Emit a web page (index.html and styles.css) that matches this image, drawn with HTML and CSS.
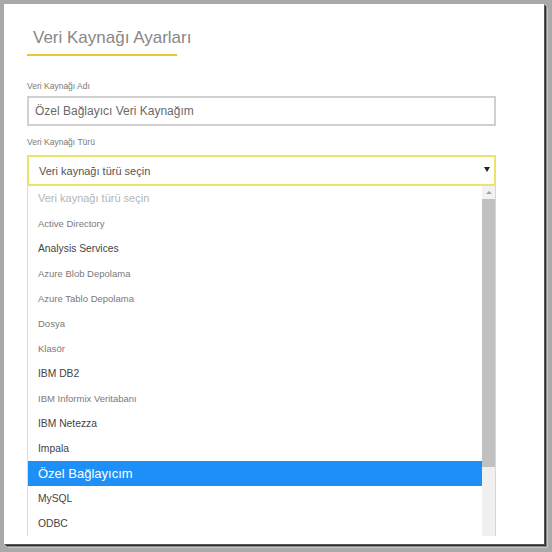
FILE: index.html
```html
<!DOCTYPE html>
<html lang="tr">
<head>
<meta charset="utf-8">
<link rel="stylesheet" href="styles.css">
</head>
<body>
<div class="frame">
  <div class="content">
    <h1 class="title">Veri Kaynağı Ayarları</h1>
    <div class="label first">Veri Kaynağı Adı</div>
    <div class="input">Özel Bağlayıcı Veri Kaynağım</div>
    <div class="label">Veri Kaynağı Türü</div>
    <div class="select"><span>Veri kaynağı türü seçin</span><span class="arrow"></span></div>
    <div class="list">
      <div class="items">
        <div class="item placeholder">Veri kaynağı türü seçin</div>
        <div class="item small">Active Directory</div>
        <div class="item big">Analysis Services</div>
        <div class="item small">Azure Blob Depolama</div>
        <div class="item small">Azure Tablo Depolama</div>
        <div class="item small">Dosya</div>
        <div class="item small">Klasör</div>
        <div class="item big">IBM DB2</div>
        <div class="item small">IBM Informix Veritabanı</div>
        <div class="item big">IBM Netezza</div>
        <div class="item big">Impala</div>
        <div class="item selected">Özel Bağlayıcım</div>
        <div class="item big">MySQL</div>
        <div class="item big">ODBC</div>
      </div>
      <div class="scrollbar">
        <div class="sb-up"><span class="up-arrow"></span></div>
        <div class="sb-thumb"></div>
        <div class="sb-track"></div>
      </div>
    </div>
  </div>
</div>
</body>
</html>
```
FILE: styles.css
```css
html, body {
  margin: 0;
  padding: 0;
}
body {
  background: #a9a9a9;
  width: 552px;
  height: 552px;
  overflow: hidden;
  font-family: "Liberation Sans", Arial, sans-serif;
}
.frame {
  margin: 4px 0 0 4px;
  width: 540px;
  height: 540px;
  background: #ffffff;
  box-shadow: 1px 1px 0 #555, 2px 2px 0 #2e2e2e, 3px 3px 0 #8a8a8a, 4px 4px 0 #c4c4c4;
  overflow: hidden;
}
.content {
  padding: 0 48px 0 23px;
  display: flex;
  flex-direction: column;
}
.title {
  margin: 24px 0 0 0;
  width: 150px;
  font-size: 17px;
  font-weight: normal;
  color: #878787;
  padding: 0 0 6px 6px;
  box-sizing: border-box;
  height: 28px;
  line-height: 20px;
  white-space: nowrap;
  border-bottom: 2px solid #e6c832;
}
.label {
  font-size: 8.5px;
  color: #7a7a7a;
  height: 12px;
  line-height: 12px;
  margin-top: 10px;
}
.label.first {
  margin-top: 24px;
}
.input {
  margin-top: 4px;
  height: 30px;
  box-sizing: border-box;
  border: 2px solid #d0d0d0;
  font-size: 12px;
  color: #6a6a6a;
  line-height: 26px;
  padding-left: 6px;
}
.select {
  margin-top: 7px;
  height: 31px;
  box-sizing: border-box;
  border: 2px solid #ece46a;
  display: flex;
  align-items: center;
  justify-content: space-between;
  padding: 0 4px 0 10px;
  font-size: 11px;
  color: #555;
}
.arrow {
  width: 0;
  height: 0;
  border-left: 3px solid transparent;
  border-right: 3px solid transparent;
  border-top: 5px solid #222;
  margin-top: -2px;
}
.list {
  height: 350px;
  display: flex;
  border-left: 1px solid #dcdcdc;
}
.items {
  flex: 1;
  display: flex;
  flex-direction: column;
  overflow: hidden;
}
.item {
  flex: 0 0 25px;
  height: 25px;
  line-height: 25px;
  padding-left: 10px;
  white-space: nowrap;
}
.item.placeholder {
  font-size: 11px;
  color: #b4b4b4;
}
.item.small {
  font-size: 9.5px;
  color: #7a7a7a;
}
.item.big {
  font-size: 10.3px;
  color: #444;
}
.item.selected {
  background: #1e8ff7;
  color: #ffffff;
  font-size: 13px;
  padding-left: 10px;
}
.scrollbar {
  width: 13px;
  display: flex;
  flex-direction: column;
  border-right: 1px solid #d6d6de;
}
.sb-up {
  height: 13px;
  background: #f2f2f2;
  display: flex;
  align-items: center;
  justify-content: center;
}
.up-arrow {
  width: 0;
  height: 0;
  border-left: 3px solid transparent;
  border-right: 3px solid transparent;
  border-bottom: 3px solid #a0a0a0;
}
.sb-thumb {
  height: 268px;
  background: #c1c1c1;
}
.sb-track {
  flex: 1;
  background: #f0f0f0;
}
```
